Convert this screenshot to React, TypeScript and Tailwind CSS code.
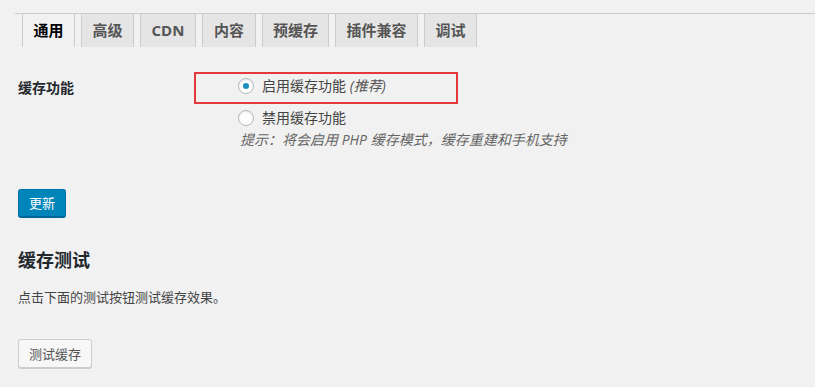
import React from "react";

const tabs = [
  { label: "通用", width: "w-[53px]", active: true },
  { label: "高级", width: "w-[53px]", active: false },
  { label: "CDN", width: "w-[56px]", active: false },
  { label: "内容", width: "w-[54px]", active: false },
  { label: "预缓存", width: "w-[67px]", active: false },
  { label: "插件兼容", width: "w-[83px]", active: false },
  { label: "调试", width: "w-[53px]", active: false },
];

const Radio = ({ checked }: { checked?: boolean }) => (
  <span className="flex h-[16px] w-[16px] shrink-0 items-center justify-center rounded-full border border-[#b4b9be] bg-white shadow-[inset_0_1px_2px_rgba(0,0,0,0.1)]">
    {checked && <span className="h-[6px] w-[6px] rounded-full bg-[#1e8cbe]" />}
  </span>
);

const App = () => {
  return (
    <div className="relative h-[387px] w-full overflow-hidden bg-[#f1f1f1] font-['Open_Sans','Noto_Sans_CJK_SC',sans-serif] text-[13px] text-[#444]">
      {/* Tabs */}
      <div className="pl-[15px] pt-[13px]">
        <div className="flex h-[34px] gap-[6px] border-t border-[#ccc] pl-[7px]">
          {tabs.map((tab) => (
            <div
              key={tab.label}
              className={`flex h-full items-center justify-center border-x border-[#ccc] text-[15px] font-bold leading-none ${tab.width} ${
                tab.active ? "bg-[#f1f1f1] text-[#000]" : "bg-[#e5e5e5] text-[#555]"
              }`}
            >
              {tab.label}
            </div>
          ))}
        </div>
      </div>

      {/* Settings */}
      <div className="flex pl-[18px] pt-[29px]">
        <div className="w-[220px] pt-[2px] text-[14px] font-bold leading-[20px] text-[#23282d]">
          缓存功能
        </div>
        <div className="flex flex-col text-[14px]">
          <label className="flex h-[20px] items-center gap-[8px] leading-[20px]">
            <Radio checked />
            <span>
              启用缓存功能 <em className="text-[#555]">(推荐)</em>
            </span>
          </label>
          <label className="mt-[12px] flex h-[20px] items-center gap-[8px] leading-[20px]">
            <Radio />
            <span>禁用缓存功能</span>
          </label>
          <p className="ml-[2px] mt-[2px] h-[19px] italic leading-[19px] text-[#666]">
            提示：将会启用 PHP 缓存模式，缓存重建和手机支持
          </p>
        </div>
      </div>

      <div className="pl-[18px]">
        <button className="mt-[40px] h-[28px] rounded-[3px] border border-[#0073aa] border-b-[#006799] bg-[#0085ba] px-[10px] text-[13px] leading-[26px] text-white shadow-[0_1px_0_#006799]">
          更新
        </button>

        <h2 className="mt-[31px] text-[18px] font-bold leading-[24px] text-[#23282d]">
          缓存测试
        </h2>
        <p className="mt-[15px] leading-[20px] text-[#444]">
          点击下面的测试按钮测试缓存效果。
        </p>
        <button className="mt-[32px] h-[29px] rounded-[3px] border border-[#ccc] bg-[#f7f7f7] px-[10px] text-[13px] leading-[26px] text-[#555] shadow-[0_1px_0_#ccc]">
          测试缓存
        </button>
      </div>

      {/* Annotation box */}
      <div className="absolute left-[194px] top-[72px] h-[32px] w-[264px] border-2 border-[#e5383f]" />
    </div>
  );
};

export default App;
